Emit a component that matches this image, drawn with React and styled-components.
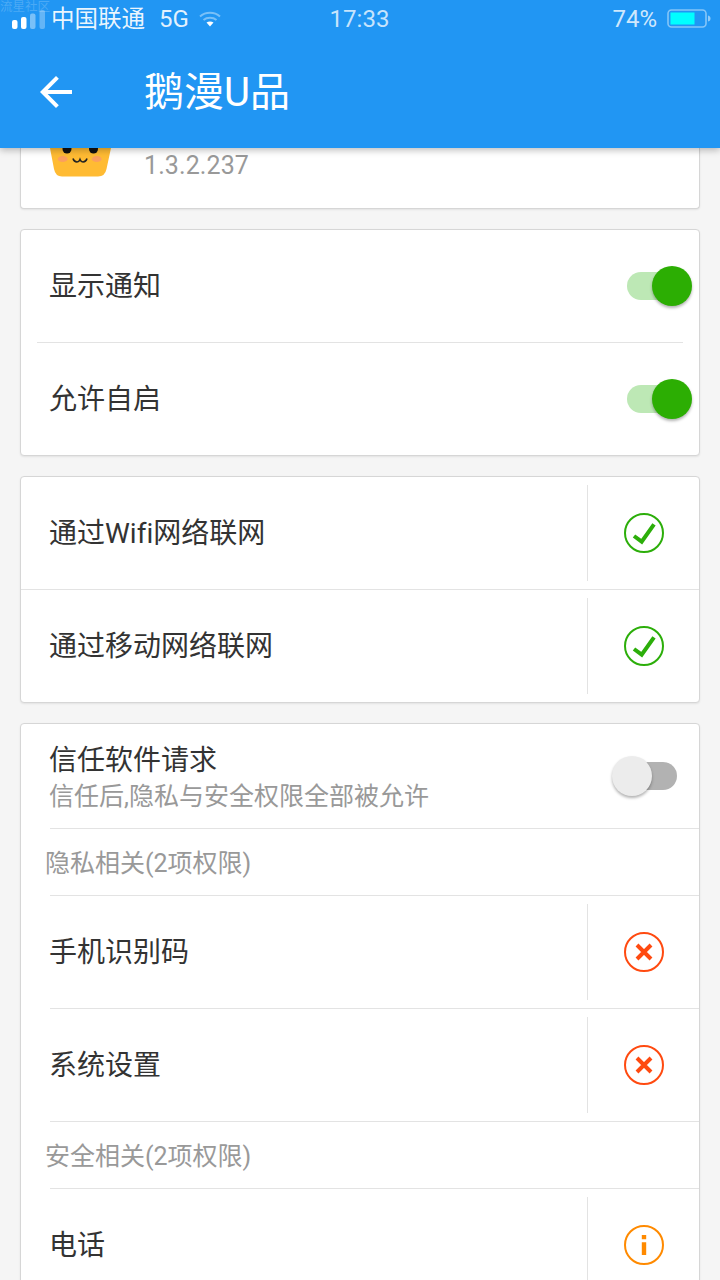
import React from 'react';
import styled, { createGlobalStyle } from 'styled-components';

const GlobalStyle = createGlobalStyle`
  html, body {
    margin: 0;
    padding: 0;
    background: #f5f5f5;
    font-family: Roboto, "Noto Sans CJK SC", sans-serif;
    font-variant-ligatures: none;
  }
  * {
    box-sizing: border-box;
  }
`;

const Page = styled.div`
  width: 720px;
  height: 1280px;
  overflow: hidden;
  background: #f5f5f5;
`;

const Header = styled.header`
  position: relative;
  z-index: 2;
  height: 148px;
  background: #2196f3;
  box-shadow: 0 2px 7px rgba(0, 0, 0, 0.28);
  color: #fff;
`;

const StatusBar = styled.div`
  position: relative;
  display: grid;
  grid-template-columns: 1fr auto 1fr;
  align-items: center;
  height: 36px;
  padding: 0 9px 0 11px;
  font-size: 24px;
  line-height: 36px;
`;

const Watermark = styled.span`
  position: absolute;
  left: 0;
  top: 0;
  font-size: 12.5px;
  line-height: 13px;
  color: rgba(255, 255, 255, 0.2);
`;

const StatusLeft = styled.div`
  display: flex;
  align-items: center;
`;

const Carrier = styled.span`
  margin-left: 4px;
  font-size: 23.5px;
  color: rgba(255, 255, 255, 0.92);
`;

const Network = styled.span`
  margin-left: 14px;
  color: rgba(255, 255, 255, 0.88);
`;

const WifiIcon = styled.svg`
  margin-left: 10px;
`;

const Clock = styled.span`
  margin-right: 3px;
  padding-top: 1px;
  color: rgba(255, 255, 255, 0.75);
`;

const StatusRight = styled.div`
  display: flex;
  align-items: center;
  justify-content: flex-end;
  gap: 10px;
  padding-top: 1px;
  color: rgba(255, 255, 255, 0.8);
`;

const Toolbar = styled.div`
  display: flex;
  align-items: center;
  height: 112px;
  padding-left: 32px;
`;

const BackIcon = styled.svg`
  display: block;
  fill: #fff;
`;

const Title = styled.h1`
  margin: 0 0 6px 64px;
  font-size: 40px;
  font-weight: 400;
`;

const Content = styled.main`
  display: flex;
  flex-direction: column;
  gap: 20px;
  padding: 0 20px;
`;

const Card = styled.section`
  background: #fff;
  border: 1px solid #d6d6d6;
  border-radius: 4px;
  box-shadow: 0 1px 2px rgba(0, 0, 0, 0.08);
`;

const AppCard = styled(Card)`
  display: flex;
  height: 61px;
  padding-left: 29px;
  border-top: none;
  border-radius: 0 0 4px 4px;
`;

const AppVersion = styled.span`
  margin: 3px 0 0 33px;
  font-size: 25px;
  letter-spacing: 0.1px;
  line-height: 30px;
  color: #999;
`;

const Row = styled.div`
  display: flex;
  align-items: center;
  height: ${(p) => p.$height || (p.$last ? 112 : 113)}px;
  margin-left: ${(p) => p.$inset || 0}px;
  margin-right: ${(p) => p.$insetRight || 0}px;
  border-bottom: ${(p) => (p.$last ? 'none' : '1px solid #e3e3e3')};
`;

const Label = styled.div`
  flex: 1;
  margin-left: -1px;
  padding-left: ${(p) => p.$pad || 0}px;
  padding-bottom: 4px;
  font-size: 28px;
  color: #333;
`;

const TitleBlock = styled.div`
  flex: 1;
  display: flex;
  flex-direction: column;
  margin-left: -1px;
  padding-top: 5px;
`;

const TitleLine = styled.span`
  font-size: 28px;
  line-height: 36px;
  color: #333;
`;

const SubLine = styled.span`
  font-size: 25px;
  line-height: 35px;
  color: #999;
`;

const SectionHead = styled.div`
  display: flex;
  align-items: center;
  height: 67px;
  margin-left: 29px;
  padding-bottom: 3px;
  border-bottom: 1px solid #e3e3e3;
  font-size: 25px;
  color: #999;
  text-indent: -5px;
`;

const ActionCell = styled.div`
  display: flex;
  align-items: center;
  justify-content: center;
  width: 112px;
  height: 96px;
  border-left: 1px solid #e3e3e3;
`;

const Track = styled.div`
  position: relative;
  width: 50px;
  height: 28px;
  border-radius: 14px;
  margin-right: ${(p) => p.$right}px;
  background: ${(p) => (p.$on ? '#bde8b5' : '#b2b2b2')};
`;

const Knob = styled.div`
  position: absolute;
  top: -6px;
  left: ${(p) => (p.$on ? '25px' : '-15px')};
  width: 40px;
  height: 40px;
  border-radius: 50%;
  background: ${(p) => (p.$on ? '#2cae03' : '#ececec')};
  box-shadow: 0 2px 3px rgba(0, 0, 0, 0.3);
`;

const Switch = ({ on, right }) => (
  <Track $on={on} $right={right}>
    <Knob $on={on} />
  </Track>
);

const StateIcon = ({ kind }) => {
  const colors = { ok: '#2cae0a', deny: '#ff4a10', ask: '#ff8a00' };
  const color = colors[kind];
  return (
    <svg width="40" height="40" viewBox="0 0 40 40" fill="none">
      <circle cx="20" cy="20" r="19" stroke={color} strokeWidth="2" />
      {kind === 'ok' && <path d="M10 23 L17.7 28.7 L30 11.3" stroke={color} strokeWidth="4" />}
      {kind === 'deny' && <path d="M13 13 L27 27 M27 13 L13 27" stroke={color} strokeWidth="4" />}
      {kind === 'ask' && <path d="M17.8 10h4.4v4.3h-4.4z M17.8 17.3h4.4V30h-4.4z" fill={color} />}
    </svg>
  );
};

const SignalIcon = () => (
  <svg width="36" height="30" viewBox="0 0 36 30" fill="#fff">
    <rect x="1" y="16" width="5.5" height="9" rx="2" />
    <rect x="10" y="13" width="5.5" height="12" rx="2" />
    <rect x="19" y="9.5" width="5.5" height="15.5" rx="2" opacity="0.4" />
    <rect x="28.5" y="6" width="5.5" height="19" rx="2" opacity="0.3" />
  </svg>
);

const Wifi = () => (
  <WifiIcon width="22" height="16" viewBox="0 0 22 16" fill="none">
    <path d="M1 5.5 C6.5 0.5 15.5 0.5 21 5.5" stroke="#fff" strokeOpacity="0.4" strokeWidth="2" />
    <path d="M4.5 9 C8 6 14 6 17.5 9" stroke="#fff" strokeOpacity="0.4" strokeWidth="2" />
    <path d="M7.5 11.5 C9.5 10 12.5 10 14.5 11.5 L11 15.5 Z" fill="#fff" />
  </WifiIcon>
);

const Battery = () => (
  <svg width="44" height="20" viewBox="0 0 44 20" fill="none">
    <rect x="1" y="1" width="38" height="17" rx="3.5" stroke="#fff" strokeOpacity="0.45" strokeWidth="1.6" />
    <rect x="3.5" y="3.5" width="24" height="12" fill="#00ffff" />
    <path d="M41 6.5 C43 7 43.5 8 43.5 9.5 C43.5 11 43 12 41 12.5 Z" fill="#fff" fillOpacity="0.5" />
  </svg>
);

// the app icon is scrolled under the header, only its lower half shows
const AppIcon = () => (
  <svg width="61" height="30" viewBox="0 0 61 30">
    <path d="M0 0 H61 L56.5 21 Q55 28.5 48 28.5 H12 Q5.5 28.5 4 21 Z" fill="#ffbb33" />
    <circle cx="17" cy="1" r="4.5" fill="#111" />
    <circle cx="43.5" cy="1" r="4.5" fill="#111" />
    <ellipse cx="12.7" cy="11" rx="5" ry="3" fill="#fb9f5f" />
    <ellipse cx="46.7" cy="11" rx="5" ry="3" fill="#fb9f5f" />
    <path d="M23 10.5 Q24 14 27 14 Q29 14 30 11.5 Q31 14 33 14 Q36 14 37 10.5" fill="none" stroke="#222" strokeWidth="1.6" />
  </svg>
);

const NetworkRow = ({ label, kind, last }) => (
  <Row $inset={0} $last={last}>
    <Label $pad={29}>{label}</Label>
    <ActionCell>
      <StateIcon kind={kind} />
    </ActionCell>
  </Row>
);

const PermissionRow = ({ label, kind, last }) => (
  <Row $inset={29} $last={last}>
    <Label>{label}</Label>
    <ActionCell>
      <StateIcon kind={kind} />
    </ActionCell>
  </Row>
);

export default function App() {
  return (
    <Page>
      <GlobalStyle />
      <Header>
        <StatusBar>
          <Watermark>流星社区</Watermark>
          <StatusLeft>
            <SignalIcon />
            <Carrier>中国联通</Carrier>
            <Network>5G</Network>
            <Wifi />
          </StatusLeft>
          <Clock>17:33</Clock>
          <StatusRight>
            <span>74%</span>
            <Battery />
          </StatusRight>
        </StatusBar>
        <Toolbar>
          <BackIcon width="48" height="48" viewBox="0 0 24 24">
            <path d="M20 11H7.83l5.59-5.59L12 4l-8 8 8 8 1.41-1.41L7.83 13H20v-2z" />
          </BackIcon>
          <Title>鹅漫U品</Title>
        </Toolbar>
      </Header>

      <Content>
        <AppCard>
          <AppIcon />
          <AppVersion>1.3.2.237</AppVersion>
        </AppCard>

        <Card>
          <Row $inset={16} $insetRight={16}>
            <Label $pad={13}>显示通知</Label>
            <Switch on right={6} />
          </Row>
          <Row $inset={16} $insetRight={16} $last>
            <Label $pad={13}>允许自启</Label>
            <Switch on right={6} />
          </Row>
        </Card>

        <Card>
          <NetworkRow label="通过Wifi网络联网" kind="ok" />
          <NetworkRow label="通过移动网络联网" kind="ok" last />
        </Card>

        <Card>
          <Row $inset={29} $height={105}>
            <TitleBlock>
              <TitleLine>信任软件请求</TitleLine>
              <SubLine>信任后,隐私与安全权限全部被允许</SubLine>
            </TitleBlock>
            <Switch right={22} />
          </Row>
          <SectionHead>隐私相关(2项权限)</SectionHead>
          <PermissionRow label="手机识别码" kind="deny" />
          <PermissionRow label="系统设置" kind="deny" />
          <SectionHead>安全相关(2项权限)</SectionHead>
          <PermissionRow label="电话" kind="ask" />
        </Card>
      </Content>
    </Page>
  );
}
